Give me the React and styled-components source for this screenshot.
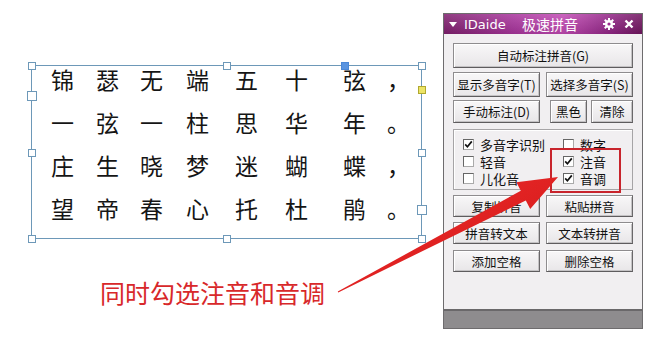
import React from 'react'
import styled, { createGlobalStyle } from 'styled-components'

const GlobalStyle = createGlobalStyle`
    body{
        margin:0;
        background:#fff;
        font-family:"Noto Sans CJK SC","Noto Sans",sans-serif;
    }
`

const Page = styled.div`
    position: relative;
    width: 666px;
    height: 350px;
    display: flex;
    background: #fff;
    overflow: hidden;
`

const LeftPane = styled.div`
    width: 443px;
    box-sizing: border-box;
    padding: 65px 0 0 31px;
`

const Frame = styled.div`
    position: relative;
    width: 391px;
    height: 174px;
    box-sizing: border-box;
    border: 1px solid #6d98b8;
    padding: 0 0 0 19px;
`

const Poem = styled.div`
    display: grid;
    grid-template-columns: 45px 44px 46px 49px 50px 58px 44px 22px;
    grid-auto-rows: 26px;
    row-gap: 17px;
    font-size: 23px;
    line-height: 26px;
    color: #151515;
`

const Handle = styled.div`
    position: absolute;
    width: ${p => p.$big ? 8 : 6}px;
    height: ${p => p.$big ? 8 : 6}px;
    margin: ${p => p.$big ? -5 : -4}px 0 0 ${p => p.$big ? -5 : -4}px;
    border: 1px solid ${p => p.$fill === 'blue' ? '#4a88d8' : p.$fill === 'yellow' ? '#b0a830' : '#6d98b8'};
    background: ${p => p.$fill === 'blue' ? '#5a94e0' : p.$fill === 'yellow' ? '#ece466' : '#fff'};
`

const Note = styled.div`
    margin: 38px 0 0 69px;
    font-size: 25px;
    line-height: 30px;
    color: #d8282a;
`

const Window = styled.div`
    width: 200px;
    height: 316px;
    margin-top: 13px;
    box-sizing: border-box;
    border: 1px solid #6e6c6e;
    display: flex;
    flex-direction: column;
`

const TitleBar = styled.div`
    height: 20px;
    display: flex;
    align-items: center;
    color: #fff;
    padding-left: 5px;
    background: linear-gradient(180deg, rgba(255,255,255,0.14), rgba(0,0,0,0.1)),
                linear-gradient(90deg, #80206f 0%, #a8349c 35%, #c24ab4 60%, #902484 85%, #70165f 100%);
`

const Caret = styled.span`
    width: 0;
    height: 0;
    border-left: 4px solid transparent;
    border-right: 4px solid transparent;
    border-top: 5px solid #fff;
    margin: 1px 7px 0 0;
`

const Brand = styled.span`
    font-family: "DejaVu Sans", sans-serif;
    font-size: 13px;
    width: 58px;
`

const Caption = styled.span`
    font-size: 14px;
    flex: 1;
`

const TitleIcon = styled.span`
    display: flex;
    align-items: center;
    margin-right: ${p => p.$gap}px;
`

const Body = styled.div`
    flex: 1;
    background: #f1eff1;
    padding: 9px 9px 0;
    display: flex;
    flex-direction: column;
`

const Row = styled.div`
    display: flex;
    gap: ${p => p.$gap ?? 6}px;
    margin-top: ${p => p.$top}px;
`

const Button = styled.button`
    width: ${p => p.$w ? p.$w + 'px' : '100%'};
    height: ${p => p.$h}px;
    margin-right: ${p => p.$mr || 0}px;
    padding: 0;
    box-sizing: border-box;
    border: 1px solid #8e8c8e;
    border-right-color: #6a686a;
    border-bottom-color: #5e5c5e;
    box-shadow: inset 1px 1px #fff, inset -1px -1px #c4c2c4;
    background: linear-gradient(180deg, #f8f7f8, #e8e6e8);
    font-family: "Noto Sans CJK SC", sans-serif;
    font-size: 12.5px;
    color: #111;
    white-space: nowrap;
`

const Group = styled.div`
    position: relative;
    margin-top: 6px;
    height: 61px;
    box-sizing: border-box;
    border: 1px solid #a6a4a6;
    box-shadow: inset 1px 1px #fff;
    padding: 6px 0 0 9px;
    display: grid;
    grid-template-columns: 100px 1fr;
    grid-auto-rows: 17px;
`

const Option = styled.label`
    display: flex;
    align-items: center;
    height: 17px;
    font-size: 13px;
    line-height: 17px;
    color: #111;
`

const Box = styled.span`
    flex: none;
    width: 11px;
    height: 11px;
    box-sizing: border-box;
    border: 1px solid #666;
    border-right-color: #aaa;
    border-bottom-color: #aaa;
    background: #fff;
    margin-right: 6px;
    display: flex;
    align-items: center;
    justify-content: center;
`

const Highlight = styled.div`
    position: absolute;
    left: 96px;
    top: 18px;
    width: 71px;
    height: 45px;
    box-sizing: border-box;
    border: 2px solid #c8242c;
`

const StatusBar = styled.div`
    height: 17px;
    background: #8e8c8e;
    border-top: 2px solid #6a686a;
`

const Arrow = styled.svg`
    position: absolute;
    left: 0;
    top: 0;
    pointer-events: none;
`

const poem = [
    ['锦', '瑟', '无', '端', '五', '十', '弦', '，'],
    ['一', '弦', '一', '柱', '思', '华', '年', '。'],
    ['庄', '生', '晓', '梦', '迷', '蝴', '蝶', '，'],
    ['望', '帝', '春', '心', '托', '杜', '鹃', '。'],
]

const handles = [
    { x: 0, y: 0 }, { x: 195, y: 0 }, { x: 313, y: 0, fill: 'blue' }, { x: 390, y: 0 },
    { x: 390, y: 24, fill: 'yellow' }, { x: 390, y: 87 }, { x: 390, y: 144, big: true },
    { x: 390, y: 173 }, { x: 195, y: 173 }, { x: 0, y: 173 }, { x: 0, y: 87 },
    { x: 0, y: 30, big: true },
]

function Check({ on }) {
    return (
        <Box>
            {on && (
                <svg width="9" height="9" viewBox="0 0 9 9">
                    <path d="M1.2 4.4 L3.4 6.8 L7.8 1.4" stroke="#111" strokeWidth="1.7" fill="none" />
                </svg>
            )}
        </Box>
    )
}

function App() {
    return (
        <Page>
            <GlobalStyle />
            <LeftPane>
                <Frame>
                    <Poem>
                        {poem.flat().map((c, i) => <span key={i}>{c}</span>)}
                    </Poem>
                    {handles.map((h, i) => (
                        <Handle key={i} $big={h.big} $fill={h.fill} style={{ left: h.x, top: h.y }} />
                    ))}
                </Frame>
                <Note>同时勾选注音和音调</Note>
            </LeftPane>

            <Window>
                <TitleBar>
                    <Caret />
                    <Brand>IDaide</Brand>
                    <Caption>极速拼音</Caption>
                    <TitleIcon $gap={9}>
                        <svg width="12" height="12" viewBox="0 0 12 12">
                            <g fill="#fff">
                                <circle cx="6" cy="6" r="4" />
                                <rect x="5" y="0" width="2" height="12" />
                                <rect x="0" y="5" width="12" height="2" />
                                <rect x="5" y="0" width="2" height="12" transform="rotate(45 6 6)" />
                                <rect x="5" y="0" width="2" height="12" transform="rotate(-45 6 6)" />
                            </g>
                            <circle cx="6" cy="6" r="1.6" fill="#9a2a8e" />
                        </svg>
                    </TitleIcon>
                    <TitleIcon $gap={8}>
                        <svg width="10" height="10" viewBox="0 0 10 10">
                            <path d="M1.5 1.5 L8.5 8.5 M8.5 1.5 L1.5 8.5" stroke="#fff" strokeWidth="2.4" />
                        </svg>
                    </TitleIcon>
                </TitleBar>

                <Body>
                    <Button $h={25}>自动标注拼音(G)</Button>
                    <Row $top={4}>
                        <Button $w={87} $h={25}>显示多音字(T)</Button>
                        <Button $w={87} $h={25}>选择多音字(S)</Button>
                    </Row>
                    <Row $top={3} $gap={4}>
                        <Button $w={87} $h={23} $mr={6}>手动标注(D)</Button>
                        <Button $w={37} $h={23}>黑色</Button>
                        <Button $w={42} $h={23}>清除</Button>
                    </Row>
                    <Group>
                        <Option><Check on />多音字识别</Option>
                        <Option><Check />数字</Option>
                        <Option><Check />轻音</Option>
                        <Option><Check on />注音</Option>
                        <Option><Check />儿化音</Option>
                        <Option><Check on />音调</Option>
                        <Highlight />
                    </Group>
                    <Row $top={5}>
                        <Button $w={87} $h={22}>复制拼音</Button>
                        <Button $w={87} $h={22}>粘贴拼音</Button>
                    </Row>
                    <Row $top={5}>
                        <Button $w={87} $h={22}>拼音转文本</Button>
                        <Button $w={87} $h={22}>文本转拼音</Button>
                    </Row>
                    <Row $top={6}>
                        <Button $w={87} $h={22}>添加空格</Button>
                        <Button $w={87} $h={22}>删除空格</Button>
                    </Row>
                </Body>
                <StatusBar />
            </Window>

            <Arrow width="666" height="350" viewBox="0 0 666 350">
                <defs>
                    <linearGradient id="shaft" x1="0" y1="0" x2="1" y2="1">
                        <stop offset="0" stopColor="#f03030" />
                        <stop offset="1" stopColor="#d01414" />
                    </linearGradient>
                </defs>
                <polygon
                    points="337.8,291.6 520.8,190.7 516.4,182.3 558,177 530.2,208.9 525.8,200.5 338.2,292.4"
                    fill="url(#shaft)"
                />
            </Arrow>
        </Page>
    )
}

export default App
